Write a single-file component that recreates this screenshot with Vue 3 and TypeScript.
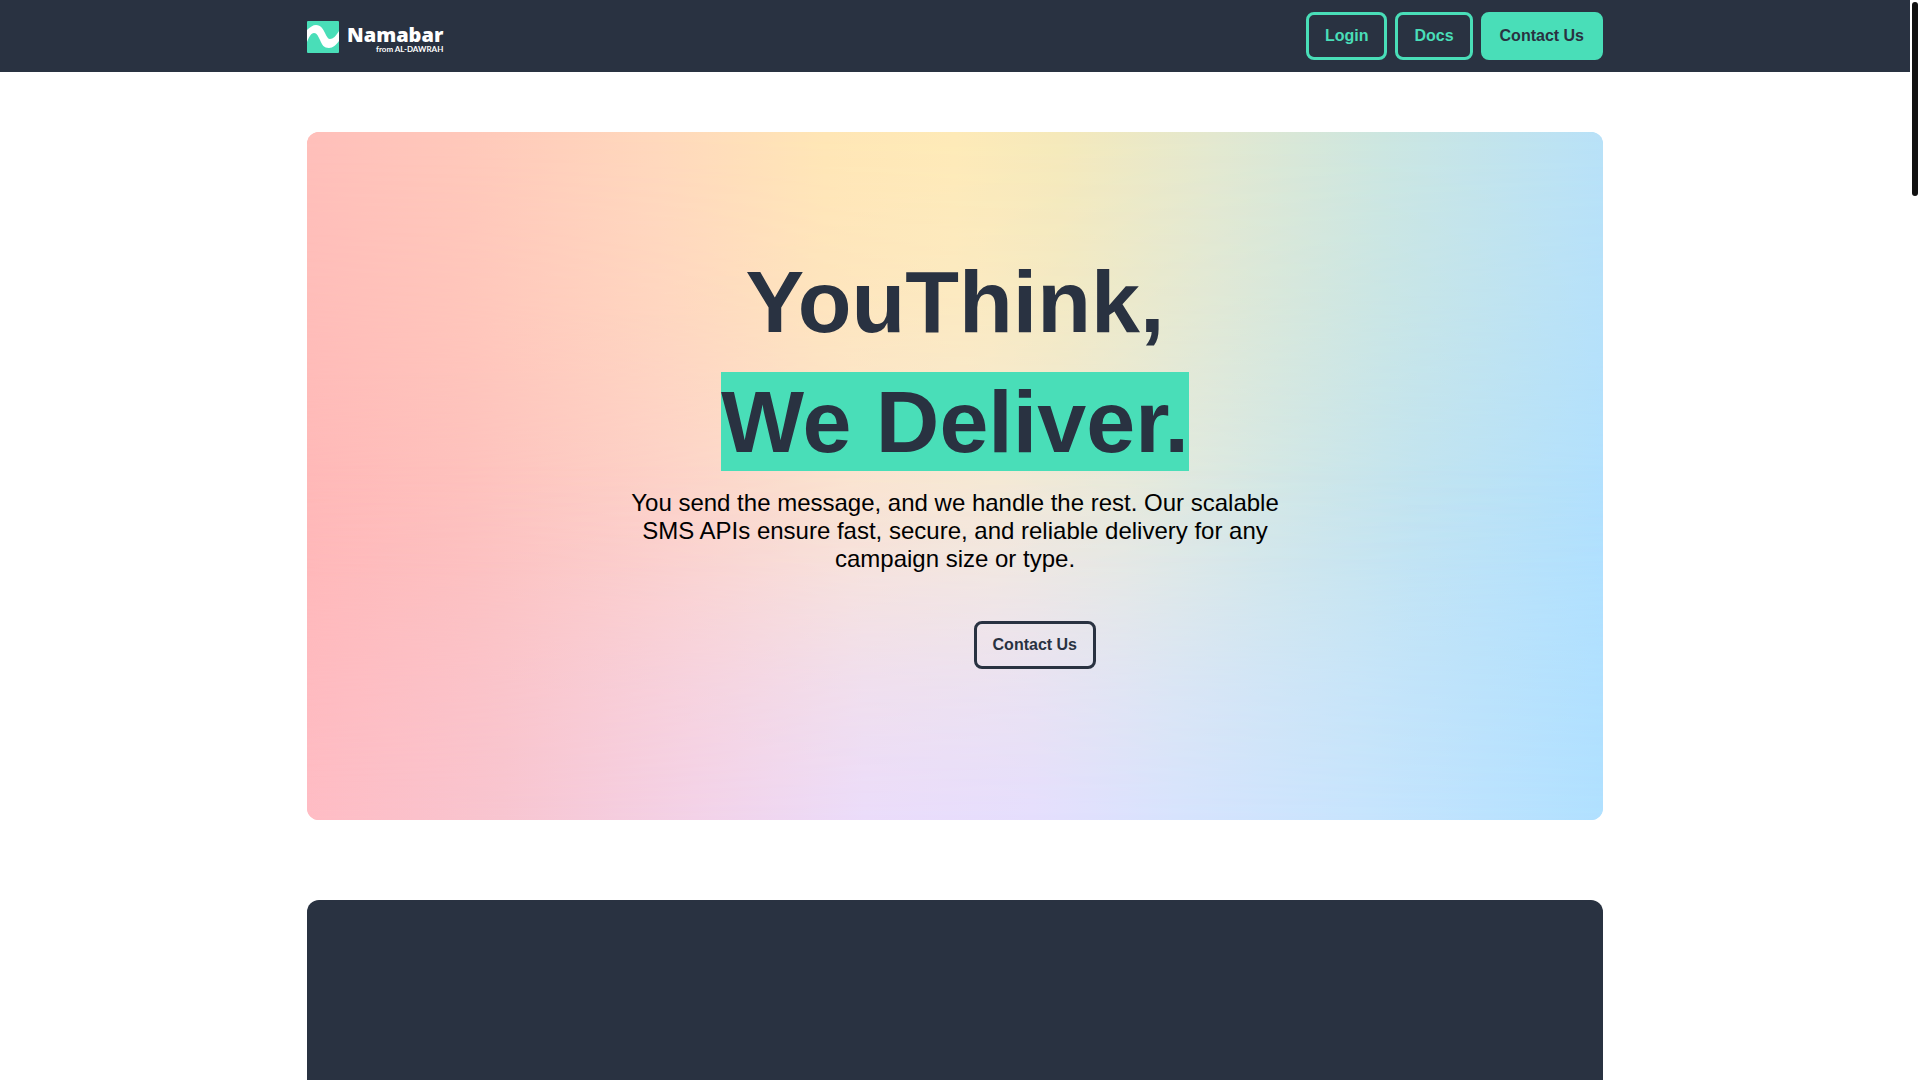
<script setup lang="ts">
interface NavAction {
  label: string
  href: string
  filled: boolean
}

const actions: NavAction[] = [
  { label: 'Login', href: '#login', filled: false },
  { label: 'Docs', href: '#docs', filled: false },
  { label: 'Contact Us', href: '#contact', filled: true },
]
</script>

<template>
  <div class="page">
    <header class="nav">
      <div class="container nav-inner">
        <a class="brand" href="#home">
          <svg class="brand-mark" viewBox="0 0 32 32" aria-hidden="true">
            <rect width="32" height="32" rx="1" fill="#49deb8" />
            <path
              d="M0 9C3 6 6 4 9 4c5 0 7 4 9 8 2 4 3 6 5 6 3 0 6-3 9-8v10c-3 4-6 7-10 7-5 0-7-3-9-8-2-4-3-7-6-7-3 0-5 4-7 9z"
              fill="#fff"
            />
          </svg>
          <span class="brand-text">
            <span class="brand-name">Namabar</span>
            <span class="brand-sub">from AL-DAWRAH</span>
          </span>
        </a>
        <nav class="actions">
          <a
            v-for="action in actions"
            :key="action.label"
            :href="action.href"
            class="btn btn-mint"
            :class="{ filled: action.filled }"
          >{{ action.label }}</a>
        </nav>
      </div>
    </header>

    <main class="container main">
      <section class="hero">
        <div class="hero-content">
          <h1>YouThink,<br /><span class="highlight">We Deliver.</span></h1>
          <p>
            You send the message, and we handle the rest. Our scalable SMS APIs
            ensure fast, secure, and reliable delivery for any campaign size or
            type.
          </p>
          <div class="hero-actions">
            <a href="#contact" class="btn btn-dark">Contact Us</a>
          </div>
        </div>
      </section>
      <section class="panel"></section>
    </main>
    <div class="scrollbar" aria-hidden="true"><div class="thumb"></div></div>
  </div>
</template>

<style>
body {
  margin: 0;
  background: #fff;
}
</style>

<style scoped>
.page {
  box-sizing: border-box;
  display: flex;
  flex-direction: column;
  min-height: 100vh;
  padding-right: 10px;
  font-family: 'Liberation Sans', Arial, sans-serif;
  color: #000;
}

.container {
  box-sizing: border-box;
  width: 100%;
  max-width: 1296px;
  margin: 0 auto;
}

.nav {
  background: #293241;
  padding: 12px 0;
}

.nav-inner {
  display: flex;
  align-items: center;
  justify-content: space-between;
}

.brand {
  display: flex;
  align-items: center;
  gap: 8px;
  padding-top: 2px;
  color: #fff;
  text-decoration: none;
}

.brand-mark {
  display: block;
  width: 32px;
  height: 32px;
}

.brand-text {
  display: flex;
  flex-direction: column;
  align-items: flex-end;
  padding-top: 4px;
}

.brand-name {
  font: 800 20px/20px 'Open Sans', sans-serif;
}

.brand-sub {
  font: 700 8px/8px Lato, sans-serif;
}

.actions {
  display: flex;
  gap: 8px;
}

.btn {
  box-sizing: border-box;
  display: inline-flex;
  align-items: center;
  height: 48px;
  padding: 0 16px;
  border: 3px solid currentColor;
  border-radius: 8px;
  font-size: 16px;
  font-weight: 700;
  text-decoration: none;
}

.btn-mint {
  color: #49deb8;
}

.btn-mint.filled {
  background: #49deb8;
  border-color: #49deb8;
  color: #293241;
}

.btn-dark {
  color: #293241;
}

.main {
  flex: 1;
  display: flex;
  flex-direction: column;
  gap: 80px;
  padding-top: 60px;
}

.hero {
  position: relative;
  overflow: hidden;
  border-radius: 12px;
  padding: 110px 24px 151px;
  background: linear-gradient(
    to right,
    #ffb8b8 0%,
    #fec0be 12%,
    #fdd2cb 28%,
    #fae4d6 42%,
    #f5eadb 53%,
    #e8ebe0 63%,
    #d2e8e9 75%,
    #c1e4f3 86%,
    #b1e1ff 100%
  );
}

/* Warm wash from the top edge and lavender wash from the bottom edge */
.hero::before,
.hero::after {
  content: '';
  position: absolute;
  inset: 0;
}

.hero::before {
  background: linear-gradient(
    to right,
    #ffbfba 0%,
    #ffc8ba 12%,
    #ffd8bc 27%,
    #ffe6b5 40%,
    #feeab7 50%,
    #f5e9ba 58%,
    #e3e8cf 70%,
    #cce6e0 83%,
    #b8e1f8 100%
  );
  mask-image: linear-gradient(
    to bottom,
    #000,
    rgb(0 0 0 / 70%) 25%,
    rgb(0 0 0 / 20%) 50%,
    transparent 65%
  );
}

.hero::after {
  background: linear-gradient(
    to right,
    #ffbcc4 0%,
    #f8c5d0 15%,
    #f3d2e8 30%,
    #ebdcfa 43%,
    #e5defd 56%,
    #d7e3fd 67%,
    #c6e4fd 82%,
    #b0e0ff 100%
  );
  mask-image: linear-gradient(
    to top,
    #000,
    rgb(0 0 0 / 65%) 20%,
    rgb(0 0 0 / 20%) 38%,
    transparent 52%
  );
}

.hero-content {
  position: relative;
  z-index: 1;
  display: flex;
  flex-direction: column;
  align-items: center;
  text-align: center;
}

h1 {
  margin: 0;
  font-size: 88px;
  line-height: 120px;
  font-weight: 700;
  color: #293241;
}

.highlight {
  background: #49deb8;
}

p {
  max-width: 648px;
  margin: 7px 0 48px;
  font-size: 24px;
  line-height: 28px;
}

.hero-actions {
  display: flex;
  justify-content: flex-end;
  width: 282px;
}

.panel {
  flex: 1;
  min-height: 180px;
  border-radius: 12px 12px 0 0;
  background: #293241;
}

.scrollbar {
  position: fixed;
  top: 0;
  right: 0;
  bottom: 0;
  box-sizing: border-box;
  width: 10px;
  padding: 2px;
  background: #fff;
}

.thumb {
  height: 18%;
  border-radius: 3px;
  background: #111;
}
</style>
